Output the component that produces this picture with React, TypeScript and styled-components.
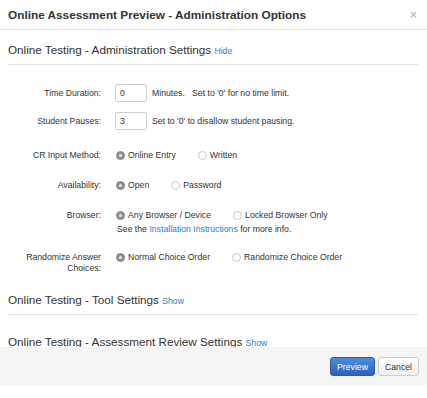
import React from 'react';
import styled, { createGlobalStyle } from 'styled-components';

const Global = createGlobalStyle`
  html, body { margin: 0; padding: 0; background: #fff; }
  body { font-family: "Liberation Sans", Arial, Helvetica, sans-serif; color: #333; }
  * { box-sizing: border-box; }
`;

const Modal = styled.div`
  width: 427px;
  height: 398px;
  display: flex;
  flex-direction: column;
  background: #fff;
  overflow: hidden;
`;

const Header = styled.div`
  height: 30px;
  flex-shrink: 0;
  border-bottom: 1px solid #e5e5e5;
  display: flex;
  align-items: center;
  justify-content: space-between;
  padding: 0 10px 0 8px;
`;

const Title = styled.h4`
  margin: 0;
  font-size: 11.8px;
  font-weight: 700;
  color: #333;
`;

const Close = styled.span`
  font-size: 12px;
  font-weight: 700;
  color: #c4c4c4;
  line-height: 1;
`;

const Body = styled.div`
  height: 317px;
  flex-shrink: 0;
  overflow: hidden;
  padding: 13px 9px 0 8px;
`;

const Section = styled.section<{ $top?: number }>`
  margin-top: ${(p) => p.$top ?? 0}px;
`;

const SectionHeading = styled.div`
  font-size: 11.7px;
  line-height: 14px;
  padding-bottom: 6px;
  border-bottom: 1px solid #e5e5e5;
  color: #333;
`;

const Link = styled.a`
  color: #2f7dd1;
  text-decoration: none;
  font-size: 8.7px;
`;

const Form = styled.div`
  display: flex;
  flex-direction: column;
`;

const FormRow = styled.div<{ $top: number; $align?: string }>`
  display: grid;
  grid-template-columns: 93px 1fr;
  column-gap: 14px;
  align-items: ${(p) => p.$align ?? 'center'};
  margin-top: ${(p) => p.$top}px;
  font-size: 8.7px;
`;

const Label = styled.div<{ $pad?: number }>`
  text-align: right;
  line-height: 11px;
  padding-left: 14px;
  padding-top: ${(p) => p.$pad ?? 0}px;
`;

const Controls = styled.div`
  display: flex;
  align-items: center;
  line-height: 13px;
`;

const Stack = styled.div`
  display: flex;
  flex-direction: column;
`;

const TextInput = styled.input`
  width: 32px;
  height: 18px;
  border: 1px solid #cfcfcf;
  border-radius: 2px;
  padding: 0 4px;
  font-family: inherit;
  font-size: 8.7px;
  color: #333;
  margin-right: 5px;
  outline: none;
`;

const Help = styled.div`
  line-height: 13px;
  padding-left: 2px;
  margin-top: 1px;
`;

const Option = styled.label`
  display: inline-flex;
  align-items: center;
  margin-right: 21px;
  margin-left: 1px;
  white-space: nowrap;
`;

const Radio = styled.span<{ $checked?: boolean }>`
  width: 9px;
  height: 9px;
  border-radius: 50%;
  margin-right: 3px;
  display: inline-flex;
  align-items: center;
  justify-content: center;
  background: ${(p) => (p.$checked ? '#8d8d8d' : '#fff')};
  border: 1px solid ${(p) => (p.$checked ? '#8a8a8a' : '#c9c9c9')};
  &::after {
    content: '';
    width: 3px;
    height: 3px;
    border-radius: 50%;
    background: ${(p) => (p.$checked ? '#e6e6e6' : 'transparent')};
  }
`;

const Footer = styled.div`
  height: 39px;
  flex-shrink: 0;
  background: #f5f5f5;
  border-radius: 0 0 4px 4px;
  display: flex;
  align-items: center;
  justify-content: flex-end;
  gap: 3px;
  padding-right: 8px;
`;

const Button = styled.button<{ $primary?: boolean }>`
  height: 19px;
  padding: 0 6px;
  border-radius: 3px;
  font-family: inherit;
  font-size: 8.7px;
  cursor: pointer;
  color: ${(p) => (p.$primary ? '#fff' : '#333')};
  background: ${(p) =>
    p.$primary
      ? 'linear-gradient(#4b8de0, #2b62bd)'
      : 'linear-gradient(#ffffff, #efefef)'};
  border: 1px solid ${(p) => (p.$primary ? '#2a5cae' : '#cdcdcd')};
`;

const RadioGroup: React.FC<{ options: string[]; checked: number }> = ({ options, checked }) => (
  <Controls>
    {options.map((o, i) => (
      <Option key={o}>
        <Radio $checked={i === checked} />
        {o}
      </Option>
    ))}
  </Controls>
);

export default function App() {
  return (
    <>
      <Global />
      <Modal>
        <Header>
          <Title>Online Assessment Preview - Administration Options</Title>
          <Close>×</Close>
        </Header>
        <Body>
          <Section>
            <SectionHeading>
              Online Testing - Administration Settings <Link href="#">Hide</Link>
            </SectionHeading>
            <Form>
              <FormRow $top={19}>
                <Label>Time Duration:</Label>
                <Controls>
                  <TextInput defaultValue="0" />
                  Minutes.&nbsp;&nbsp; Set to '0' for no time limit.
                </Controls>
              </FormRow>
              <FormRow $top={10}>
                <Label>Student Pauses:</Label>
                <Controls>
                  <TextInput defaultValue="3" />
                  Set to '0' to disallow student pausing.
                </Controls>
              </FormRow>
              <FormRow $top={19}>
                <Label>CR Input Method:</Label>
                <RadioGroup options={['Online Entry', 'Written']} checked={0} />
              </FormRow>
              <FormRow $top={17}>
                <Label>Availability:</Label>
                <RadioGroup options={['Open', 'Password']} checked={0} />
              </FormRow>
              <FormRow $top={17} $align="start">
                <Label $pad={1}>Browser:</Label>
                <Stack>
                  <RadioGroup options={['Any Browser / Device', 'Locked Browser Only']} checked={0} />
                  <Help>
                    See the <Link href="#">Installation Instructions</Link> for more info.
                  </Help>
                </Stack>
              </FormRow>
              <FormRow $top={15} $align="start">
                <Label $pad={1}>Randomize Answer Choices:</Label>
                <RadioGroup options={['Normal Choice Order', 'Randomize Choice Order']} checked={0} />
              </FormRow>
            </Form>
          </Section>
          <Section $top={19}>
            <SectionHeading>
              Online Testing - Tool Settings <Link href="#">Show</Link>
            </SectionHeading>
          </Section>
          <Section $top={20}>
            <SectionHeading>
              Online Testing - Assessment Review Settings <Link href="#">Show</Link>
            </SectionHeading>
          </Section>
        </Body>
        <Footer>
          <Button $primary>Preview</Button>
          <Button>Cancel</Button>
        </Footer>
      </Modal>
    </>
  );
}
